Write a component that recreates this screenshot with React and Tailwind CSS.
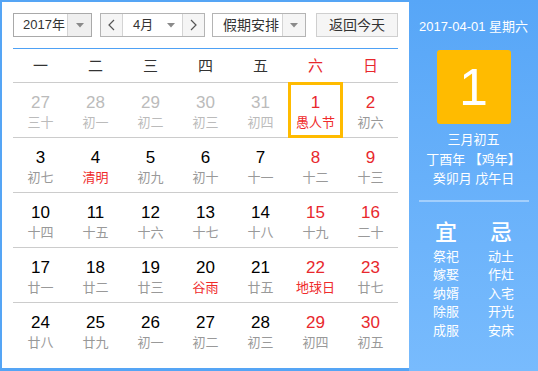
import React from "react";

const weeks = [
  [
    { d: 27, l: "三十", o: true },
    { d: 28, l: "初一", o: true },
    { d: 29, l: "初二", o: true },
    { d: 30, l: "初三", o: true },
    { d: 31, l: "初四", o: true },
    { d: 1, l: "愚人节", h: true, sel: true },
    { d: 2, l: "初六" },
  ],
  [
    { d: 3, l: "初七" },
    { d: 4, l: "清明", h: true },
    { d: 5, l: "初九" },
    { d: 6, l: "初十" },
    { d: 7, l: "十一" },
    { d: 8, l: "十二" },
    { d: 9, l: "十三" },
  ],
  [
    { d: 10, l: "十四" },
    { d: 11, l: "十五" },
    { d: 12, l: "十六" },
    { d: 13, l: "十七" },
    { d: 14, l: "十八" },
    { d: 15, l: "十九" },
    { d: 16, l: "二十" },
  ],
  [
    { d: 17, l: "廿一" },
    { d: 18, l: "廿二" },
    { d: 19, l: "廿三" },
    { d: 20, l: "谷雨", h: true },
    { d: 21, l: "廿五" },
    { d: 22, l: "地球日", h: true },
    { d: 23, l: "廿七" },
  ],
  [
    { d: 24, l: "廿八" },
    { d: 25, l: "廿九" },
    { d: 26, l: "初一" },
    { d: 27, l: "初二" },
    { d: 28, l: "初三" },
    { d: 29, l: "初四" },
    { d: 30, l: "初五" },
  ],
];

const days = ["一", "二", "三", "四", "五", "六", "日"];

function Caret() {
  return (
    <svg width="8" height="5" viewBox="0 0 8 5">
      <path d="M0 0 L8 0 L4 4.5 Z" fill="#8a8a8a" />
    </svg>
  );
}

function Chevron({ dir }) {
  return (
    <svg width="7" height="12" viewBox="0 0 7 12">
      <polyline
        points={dir === "l" ? "6,1 1,6 6,11" : "1,1 6,6 1,11"}
        fill="none"
        stroke="#555"
        strokeWidth="1.2"
      />
    </svg>
  );
}

export default function App() {
  const font = { fontFamily: '"Liberation Sans", "Noto Sans CJK SC", sans-serif' };
  return (
    <div
      className="w-[538px] h-[371px] bg-[#55a5f5] flex overflow-hidden"
      style={font}
    >
      <div className="w-[407px] ml-[2px] mt-[2px] mb-[3px] bg-white px-[11px] pt-[11px] flex flex-col">
        {/* controls */}
        <div className="flex items-center h-[24px] text-[14px] text-[#333] whitespace-nowrap">
          <div className="w-[79px] h-[24px] flex border border-[#a9a9a9]">
            <div className="flex-1 flex items-center pl-[9px] text-[13px]">2017年</div>
            <div className="w-[24px] bg-[#efefef] border-l border-[#d4d4d4] flex items-center justify-center">
              <Caret />
            </div>
          </div>
          <div className="ml-[8px] w-[105px] h-[24px] flex border border-[#b4b4b4]">
            <div className="w-[22px] bg-[#f5f5f5] border-r border-[#d4d4d4] flex items-center justify-center">
              <Chevron dir="l" />
            </div>
            <div className="flex-1 flex items-center justify-between pl-[10px] pr-[7px] text-[13px]">
              <span>4月</span>
              <Caret />
            </div>
            <div className="w-[22px] bg-[#f5f5f5] border-l border-[#d4d4d4] flex items-center justify-center">
              <Chevron dir="r" />
            </div>
          </div>
          <div className="ml-[7px] w-[94px] h-[24px] flex border border-[#b4b4b4]">
            <div className="flex-1 flex items-center pl-[10px]">假期安排</div>
            <div className="w-[23px] bg-[#f5f5f5] border-l border-[#d4d4d4] flex items-center justify-center">
              <Caret />
            </div>
          </div>
          <div className="ml-[10px] w-[82px] h-[24px] bg-[#f5f5f5] border border-[#cfcfcf] flex items-center justify-center">
            返回今天
          </div>
        </div>

        <div className="mt-[11px] h-px bg-[#4ea1f5]" />

        {/* header */}
        <div className="h-[34px] grid grid-cols-7 border-b border-[#cccccc] text-[15px] leading-[18px]">
          {days.map((d, i) => (
            <div
              key={d}
              className={`flex justify-center pt-[8px] ${i >= 5 ? "text-[#e8282d]" : "text-[#333]"}`}
            >
              {d}
            </div>
          ))}
        </div>

        {weeks.map((w, wi) => (
          <div
            key={wi}
            className={`h-[55px] grid grid-cols-7 ${wi < 4 ? "border-b border-[#cccccc]" : ""}`}
          >
            {w.map((c, ci) => {
              const weekend = ci >= 5;
              const numColor = c.o
                ? "text-[#bbbbbb]"
                : weekend
                ? "text-[#e8282d]"
                : "text-black";
              const lunColor = c.o
                ? "text-[#bbbbbb]"
                : c.h
                ? "text-[#ef2b2b]"
                : "text-[#999999]";
              return (
                <div key={ci} className="relative flex flex-col items-center pt-[11px]">
                  <div className={`text-[17px] leading-[18px] ${numColor}`}>{c.d}</div>
                  <div className={`mt-[2px] text-[13px] leading-[17px] ${lunColor}`}>{c.l}</div>
                  {c.sel && (
                    <div className="absolute left-0 right-0 -top-px -bottom-px border-[3px] border-[#ffbb00]" />
                  )}
                </div>
              );
            })}
          </div>
        ))}
      </div>

      {/* right panel */}
      <div className="flex-1 bg-gradient-to-b from-[#57a6f7] to-[#78bbfd] flex flex-col items-center text-white">
        <div className="mt-[18px] text-[13px] leading-[17px]">2017-04-01 星期六</div>
        <div className="mt-[15px] w-[74px] h-[74px] rounded-[3px] bg-[#ffbb00] flex items-center justify-center text-[52px] leading-none">
          1
        </div>
        <div className="mt-[6px] text-[13px] leading-[19.5px] flex flex-col items-center">
          <div>三月初五</div>
          <div>丁酉年 【鸡年】</div>
          <div>癸卯月 戊午日</div>
        </div>
        <div className="mt-[11px] w-[110px] h-[2px] bg-[#a3cffc]" />
        <div className="mt-[18px] flex">
          {[
            { t: "宜", items: ["祭祀", "嫁娶", "纳婿", "除服", "成服"] },
            { t: "忌", items: ["动土", "作灶", "入宅", "开光", "安床"] },
          ].map((col) => (
            <div key={col.t} className="w-[55px] flex flex-col items-center">
              <div className="text-[22px] leading-[26px] font-medium">{col.t}</div>
              <div className="mt-[2px] flex flex-col items-center text-[13px] leading-[18.5px]">
                {col.items.map((it) => (
                  <div key={it}>{it}</div>
                ))}
              </div>
            </div>
          ))}
        </div>
      </div>
    </div>
  );
}
